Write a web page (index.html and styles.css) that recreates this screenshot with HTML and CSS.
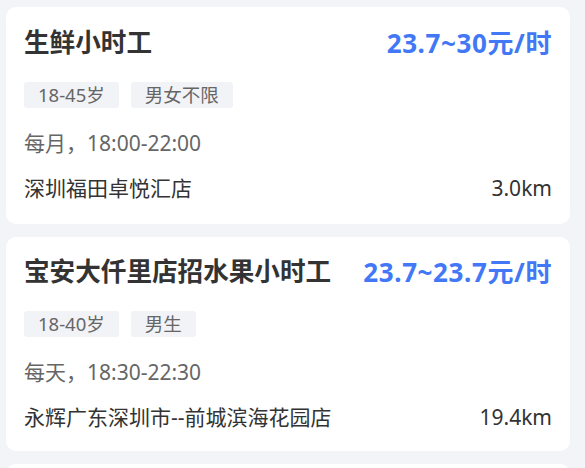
FILE: index.html
```html
<!DOCTYPE html>
<html lang="zh-CN">
<head>
<meta charset="utf-8">
<title>兼职列表</title>
<link rel="stylesheet" href="styles.css">
</head>
<body>
  <main class="job-list">
    <article class="job-card">
      <header class="job-head">
        <h2 class="job-title">生鲜小时工</h2>
        <span class="job-pay">23.7~30元/时</span>
      </header>
      <ul class="job-tags">
        <li class="tag">18-45岁</li>
        <li class="tag">男女不限</li>
      </ul>
      <p class="job-time">每月，18:00-22:00</p>
      <footer class="job-foot">
        <span class="job-store">深圳福田卓悦汇店</span>
        <span class="job-dist">3.0km</span>
      </footer>
    </article>

    <article class="job-card job-card--compact">
      <header class="job-head">
        <h2 class="job-title job-title--long">宝安大仟里店招水果小时工</h2>
        <span class="job-pay">23.7~23.7元/时</span>
      </header>
      <ul class="job-tags">
        <li class="tag">18-40岁</li>
        <li class="tag">男生</li>
      </ul>
      <p class="job-time">每天，18:30-22:30</p>
      <footer class="job-foot">
        <span class="job-store">永辉广东深圳市--前城滨海花园店</span>
        <span class="job-dist">19.4km</span>
      </footer>
    </article>

    <article class="job-card">
      <header class="job-head">
        <h2 class="job-title">水果理货员</h2>
        <span class="job-pay">22~25元/时</span>
      </header>
      <ul class="job-tags">
        <li class="tag">18-45岁</li>
        <li class="tag">男女不限</li>
      </ul>
      <p class="job-time">每周，09:00-13:00</p>
      <footer class="job-foot">
        <span class="job-store">深圳南山海岸城店</span>
        <span class="job-dist">21.6km</span>
      </footer>
    </article>
  </main>
</body>
</html>
```

FILE: styles.css
```css
* {
  box-sizing: border-box;
}

html,
body {
  margin: 0;
  padding: 0;
  background: #f3f4f8;
}

body {
  font-family: "Noto Sans", "Noto Sans CJK SC", sans-serif;
  color: #333;
  text-autospace: no-autospace;
}

.job-list {
  display: flex;
  flex-direction: column;
  gap: 13px;
  padding: 7px 15px 0 6px;
}

.job-card {
  background: #fff;
  border-radius: 10px;
  padding: 18px 18px 21px;
}

.job-card--compact {
  padding: 17px 18px 19px;
}

.job-head {
  display: flex;
  align-items: center;
  justify-content: space-between;
  gap: 12px;
  height: 36px;
}

.job-title {
  margin: 0;
  font-size: 25.6px;
  font-weight: 700;
  line-height: 36px;
  color: #333;
  white-space: nowrap;
}

.job-title--long {
  font-size: 25.6px;
}

.job-pay {
  font-size: 26px;
  font-weight: 700;
  line-height: 36px;
  letter-spacing: 0.6px;
  color: #4278f5;
  white-space: nowrap;
}

.job-tags {
  display: flex;
  gap: 12px;
  list-style: none;
  margin: 21px 0 0;
  padding: 0;
}

.tag {
  height: 26px;
  padding: 0 14px;
  border-radius: 3px;
  background: #f2f3f7;
  color: #666;
  font-size: 18.5px;
  line-height: 26px;
}

.job-time {
  margin: 20px 0 0;
  font-size: 21px;
  line-height: 30px;
  color: #666;
}

.job-foot {
  display: flex;
  justify-content: space-between;
  align-items: center;
  margin-top: 15px;
  font-size: 21px;
  line-height: 30px;
  color: #333;
}
```
